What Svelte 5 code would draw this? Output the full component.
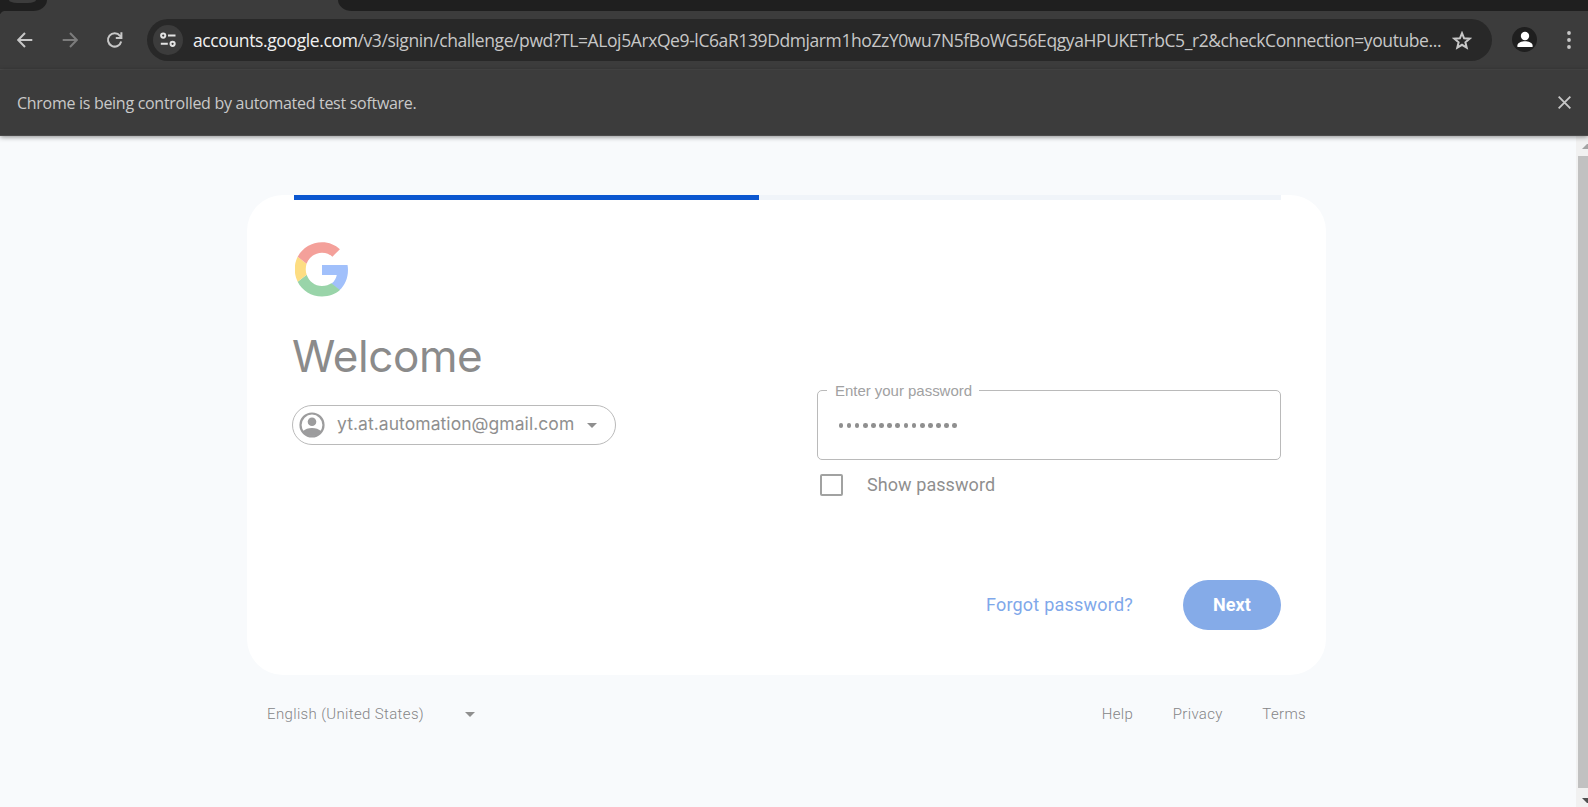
<script>
  const host = 'accounts.google.com';
  const path = '/v3/signin/challenge/pwd?TL=ALoj5ArxQe9-lC6aR139Ddmjarm1hoZzY0wu7N5fBoWG56EqgyaHPUKETrbC5_r2&checkConnection=youtube...';
  const email = 'yt.at.automation@gmail.com';
  const dots = Array.from({ length: 15 });
  const links = ['Help', 'Privacy', 'Terms'];
</script>

<div class="window">
  <div class="tabs">
    <div class="tab-left"><i></i></div>
    <div class="tab-active"></div>
    <div class="tab-rest"></div>
  </div>

  <div class="toolbar">
    <svg class="nav back" width="16" height="16" viewBox="0 0 16 16"><path d="M15.3 8H1.3M8 1 1.2 8 8 15" /></svg>
    <svg class="nav forward" width="16" height="16" viewBox="0 0 16 16"><path d="M.7 8h14M8 1l6.8 7L8 15" /></svg>
    <svg class="nav reload" width="18" height="18" viewBox="0 0 18 18"><path d="M15.2 10.500A6.700 6.700 0 1 1 14 4.800L15.600 6.400M15.400 1.300v5.600h-5.600" /></svg>
    <div class="omnibox">
      <div class="site">
        <svg width="16" height="16" viewBox="0 0 16 16"><circle cx="3.2" cy="3.6" r="2.1" /><path d="M8 3.6h7.500M.8 11.8h7" /><circle cx="12.6" cy="11.8" r="2.1" /></svg>
      </div>
      <div class="url"><span class="host">{host}</span><span class="path">{path}</span></div>
      <svg class="star" width="20" height="20" viewBox="0 0 20 20"><path d="M10 2.2l2.100 5.100 5.500.4-4.200 3.600 1.300 5.400L10 13.800l-4.700 2.900 1.300-5.400-4.200-3.600 5.500-.4z" /></svg>
    </div>
    <div class="avatar">
      <svg width="26" height="26" viewBox="0 0 26 26"><circle cx="13" cy="9" r="4.2" /><path d="M5.400 20v-1.600c0-2.800 4.600-4.200 7.600-4.200s7.600 1.400 7.600 4.200V20z" /></svg>
    </div>
    <svg class="more" width="4" height="20" viewBox="0 0 4 20"><circle cx="2" cy="3" r="1.9" /><circle cx="2" cy="10" r="1.9" /><circle cx="2" cy="17" r="1.9" /></svg>
  </div>

  <div class="infobar">
    <span>Chrome is being controlled by automated test software.</span>
    <svg width="13" height="13" viewBox="0 0 12 12"><path d="M.6.6l10.800 10.800M11.400.6L.6 11.400" /></svg>
  </div>

  <div class="view">
    <main>
      <section class="card">
        <div class="progress"><div></div></div>
        <div class="body">
          <div class="left">
            <svg class="logo" width="54" height="55" viewBox="0 0 46 47">
              <path fill="#a1c0fb" d="M45.200 23.900c0-1.600-.1-2.900-.4-4.300H23v8.600h12.600c-.3 2.100-1.600 5.300-4.700 7.500l7 5.600c4.500-4.100 7.300-10.100 7.300-17.400z" />
              <path fill="#99d4a9" d="M23 46.500c6.200 0 11.500-2 15.300-5.500l-7.300-5.700c-2 1.400-4.600 2.300-8 2.300-6.100 0-11.300-4-13.100-9.600l-7.700 5.900C6 41.500 13.900 46.500 23 46.500z" />
              <path fill="#fddd82" d="M9.900 28c-.5-1.400-.8-3-.8-4.700s.3-3.200.7-4.700L2.200 12.700C.6 15.900-.3 19.500-.3 23.300s.9 7.400 2.500 10.600z" />
              <path fill="#f4a09a" d="M23 9.100c4.300 0 7.200 1.900 8.900 3.400l6.400-6.300C34.400 2.500 29.200.2 23 .2 13.900.2 6 5.400 2.200 12.700l7.600 5.900C11.700 13.100 16.900 9.100 23 9.100z" />
            </svg>
            <h1>Welcome</h1>
            <div class="chip">
              <svg width="26" height="26" viewBox="0 0 26 26"><circle cx="13" cy="13" r="11.500" fill="none" stroke="#9c9c9d" stroke-width="2.200" /><circle cx="13" cy="9.800" r="4.300" /><path d="M3.600 19.500C6 17 9.500 15.900 13 15.900s7 1.100 9.400 3.600A12 12 0 0 1 3.600 19.500z" /></svg>
              <span>{email}</span>
              <i class="caret"></i>
            </div>
          </div>
          <div class="right">
            <div class="field">
              <label for="pw">Enter your password</label>
              <div class="dots" id="pw">{#each dots as _}<i></i>{/each}</div>
            </div>
            <div class="show"><i></i><span>Show password</span></div>
            <div class="actions"><span class="forgot">Forgot password?</span><button>Next</button></div>
          </div>
        </div>
      </section>
      <footer>
        <div class="lang"><span>English (United States)</span><i class="caret"></i></div>
        <nav>{#each links as l}<span>{l}</span>{/each}</nav>
      </footer>
    </main>
    <div class="scroll">
      <svg width="6" height="5" viewBox="0 0 6 5"><path fill="#a3a3a3" d="M0 5L5 0h1v5z" /></svg>
      <div class="thumb"></div>
      <svg width="6" height="5" viewBox="0 0 6 5"><path fill="#505050" d="M0 0h6v5H5z" /></svg>
    </div>
  </div>
</div>

<style>
  :global(body) { margin: 0; overflow: hidden; }
  .window, .window * { box-sizing: border-box; }
  .window { width: 1588px; height: 807px; overflow: hidden; display: flex; flex-direction: column; background: #f8fafc; font-family: Roboto, sans-serif; }
  svg { display: block; flex: none; }

  .tabs { display: flex; height: 11px; flex: none; background: #3c3c3c; }
  .tab-left { width: 47px; background: #1f1f1f; border-bottom-right-radius: 14px 11px; padding-left: 9px; }
  .tab-left i { display: block; width: 27px; height: 3px; background: #3c3c3c; border-radius: 0 0 8px 8px / 0 0 3px 3px; }
  .tab-active { width: 291px; }
  .tab-rest { flex: 1; background: #1f1f1f; border-bottom-left-radius: 14px 11px; }

  .toolbar { flex: none; height: 59px; background: radial-gradient(circle at 5px 5px, #3c3c3c 4.5px, #1f1f1f 5.5px) 0 0 / 4px 3px no-repeat #3c3c3c; border-bottom: 1px solid #4b4b4b; display: flex; align-items: flex-start; padding-top: 8px; }
  .nav { fill: none; stroke: #c7c7c7; stroke-width: 2; margin-top: 13px; }
  .back { margin-left: 17px; }
  .forward { margin-left: 29px; stroke: #7c7c7c; }
  .reload { margin: 12px 0 0 28px; }
  .omnibox { margin-left: 23px; width: 1345px; height: 42px; border-radius: 21px; background: #282828; display: flex; align-items: center; padding-left: 6px; }
  .site { width: 30px; height: 30px; border-radius: 50%; background: #3c3c3c; display: flex; align-items: center; justify-content: center; margin-top: -1px; }
  .site svg { fill: none; stroke: #e3e3e3; stroke-width: 2; margin-top: 1px; }
  .url { margin: 0 0 0 10px; width: 1249px; font: 17.5px/24px "Open Sans", sans-serif; white-space: nowrap; color: #c7c7c7; }
  .host { color: #f0f0f0; letter-spacing: -.38px; }
  .path { letter-spacing: -.403px; }
  .star { margin: 1px 0 0 10px; fill: none; stroke: #c7c7c7; stroke-width: 2; }
  .avatar { margin: 8px 0 0 20px; width: 25px; height: 25px; border-radius: 50%; background: #1f1f1f; overflow: hidden; display: flex; justify-content: center; }
  .avatar svg { fill: #fff; }
  .more { margin: 11px 0 0 30px; fill: #c7c7c7; }

  .infobar { position: relative; z-index: 1; flex: none; height: 66px; background: #3c3c3c; color: #c9c9c9; display: flex; align-items: center; justify-content: space-between; padding: 0 17px; border-bottom: 1px solid #4b4b4b; box-shadow: 0 1px 5px rgba(0, 0, 0, .45); font: 16px/22px "Open Sans", sans-serif; letter-spacing: -.29px; }
  .infobar svg { fill: none; stroke: #c7c7c7; stroke-width: 1.7; }

  .view { flex: 1; min-height: 0; display: flex; }
  main { flex: 1; padding: 59px 0 0 247px; }
  .scroll { width: 12px; background: #f1f1f1; display: flex; flex-direction: column; align-items: flex-end; padding: 8px 0 4px; }
  .thumb { width: 10px; height: 632px; margin: 7px 0 10px; background: #c1c1c1; }

  .card { width: 1079px; height: 480px; border-radius: 36px; background: #fff; padding: 0 45px 0 47px; }
  .progress { height: 5px; background: #f0f4f9; }
  .progress div { width: 464.5px; height: 5px; background: #0b57d0; }
  .body { display: flex; justify-content: space-between; }
  .left { margin-left: -2px; }
  .logo { margin: 42px 0 0 3px; }
  h1 { margin: 32px 0 0; font: 370 44px/54px Inter, sans-serif; letter-spacing: -.4px; color: #8b8b8b; }
  .chip { margin-top: 22px; width: 324px; height: 40px; border: 1px solid #bababa; border-radius: 20px; display: flex; align-items: center; padding-left: 6px; fill: #9c9c9d; }
  .chip span { margin: -3px 0 0 12px; width: 250px; font: 17.5px/24px Inter, sans-serif; letter-spacing: .06px; color: #8f8f8f; }
  .caret { display: block; width: 0; border: 5.5px solid transparent; border-top-color: #8f8f8f; border-bottom: 0; }

  .right { width: 464px; padding-top: 190px; }
  .field { height: 70px; border: 1px solid #bababa; border-radius: 5px; position: relative; padding: 32px 0 0 20.500px; }
  label { position: absolute; left: 9px; top: -11px; padding: 0 7px 0 8px; background: #fff; font: 15px/22px "Liberation Sans", sans-serif; letter-spacing: -.03px; color: #a1a1a2; white-space: nowrap; }
  .dots { display: flex; gap: 3.5px; }
  .dots i { width: 4.65px; height: 4.65px; border-radius: 50%; background: #8f8f8f; }
  .show { display: flex; align-items: center; margin: 12px 0 0 3px; height: 24px; }
  .show i { width: 23px; height: 22px; margin-top: 1px; border: 2px solid #a1a2a1; border-radius: 2px; }
  .show span { margin-left: 24px; font-size: 18px; letter-spacing: .07px; color: #8f8f8f; }
  .actions { display: flex; justify-content: flex-end; align-items: center; margin-top: 84px; }
  .forgot { font-size: 18px; letter-spacing: .22px; color: #7fa8ea; margin: -2px 50px 0 0; }
  button { width: 98px; height: 50px; padding: 0 0 2px; border: 0; border-radius: 25px; background: #85abe8; color: #fff; font: bold 18px Roboto, sans-serif; letter-spacing: .1px; }

  footer { width: 1039px; margin: 27px 0 0 20px; display: flex; justify-content: space-between; font-size: 15px; font-weight: 300; line-height: 24px; color: #858587; letter-spacing: .35px; }
  .lang { display: flex; align-items: center; gap: 41px; }
  nav { display: flex; gap: 39.5px; }
</style>
